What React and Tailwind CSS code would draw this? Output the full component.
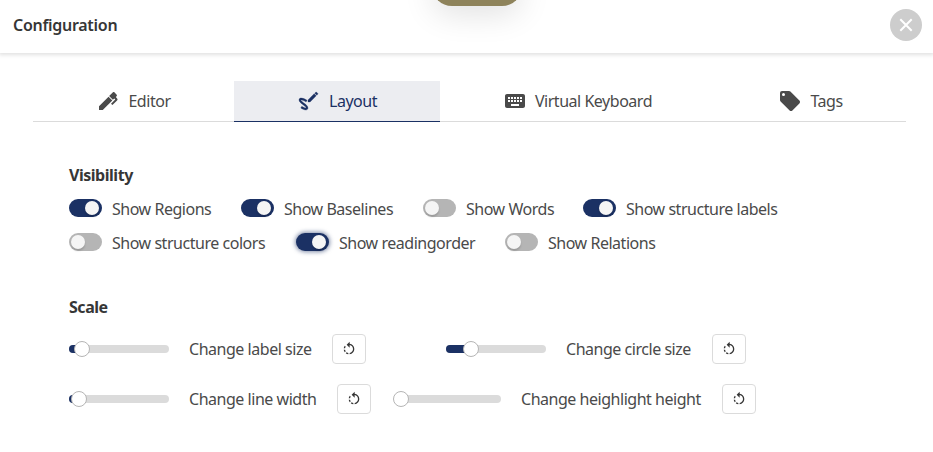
import { MdKeyboard, MdRotateLeft } from "react-icons/md";

const PenIcon = () => (
  <svg viewBox="0 0 24 24" className="h-6 w-6" fill="currentColor">
    <path d="M20.71,7.04C20.37,7.38 20.04,7.71 20.03,8.04C20,8.36 20.34,8.69 20.66,9C21.14,9.5 21.61,9.95 21.59,10.44C21.57,10.93 21.06,11.44 20.55,11.94L16.42,16.08L15,14.66L19.25,10.42L18.29,9.46L16.87,10.87L13.12,7.12L16.96,3.29C17.35,2.9 18,2.9 18.37,3.29L20.71,5.63C21.1,6 21.1,6.65 20.71,7.04M3,17.25L12.56,7.68L16.31,11.43L6.75,21H3V17.25Z" />
  </svg>
);

const DrawIcon = () => (
  <svg viewBox="0 0 24 24" className="h-6 w-6" fill="currentColor" stroke="currentColor" strokeWidth="0.3">
    <path d="M9.75 20.85C11.53 20.15 11.14 18.22 10.24 17C9.35 15.75 8.12 14.89 6.88 14.06C6 13.5 5.19 12.8 4.54 12C4.26 11.67 3.69 11.06 4.27 10.94C4.86 10.82 5.88 11.4 6.4 11.62C7.31 12 8.21 12.44 9.05 12.96L10.06 11.26C8.5 10.23 6.5 9.32 4.64 9.05C3.58 8.89 2.46 9.11 2.1 10.26C1.78 11.25 2.29 12.25 2.87 13.03C4.24 14.86 6.37 15.74 7.96 17.32C8.3 17.65 8.71 18.04 8.91 18.5C9.12 18.94 9.07 18.97 8.6 18.97C7.36 18.97 5.81 18 4.8 17.36L3.79 19.06C5.32 20 7.88 21.47 9.75 20.85M20.84 5.25C21.06 5.03 21.06 4.67 20.84 4.46L19.54 3.16C19.33 2.95 18.97 2.95 18.76 3.16L17.74 4.18L19.82 6.26M11 10.92V13H13.08L19.23 6.85L17.15 4.77L11 10.92Z" />
  </svg>
);

const TagIcon = () => (
  <svg viewBox="0 0 24 24" className="h-6 w-6" fill="currentColor">
    <path d="M5.500 7A1.500 1.500 0 1 1 5.500 4a1.500 1.500 0 0 1 0 3m15.900 4.600-9-9C12 2.200 11.500 2 11 2H4a2 2 0 0 0-2 2v7c0 .6.200 1.100.6 1.400l9 9c.4.4.9.6 1.400.6s1.100-.2 1.400-.6l7-7c.4-.4.600-.9.600-1.400 0-.6-.2-1.100-.6-1.400" />
  </svg>
);

const CloseIcon = () => (
  <svg viewBox="0 0 16 16" className="h-4 w-4" fill="none" stroke="currentColor" strokeWidth="2">
    <path d="M2.300 2.300 13.700 13.700M13.700 2.300 2.300 13.700" />
  </svg>
);

const Toggle = ({ on, focus }) => (
  <span className={`relative h-[18px] w-[33px] shrink-0 rounded-full ${on ? "bg-[#1b3164]" : "bg-[#b5b5b5]"} ${focus ? "shadow-[0_0_4px_1px_rgba(27,49,100,0.55)]" : ""}`}>
    <span className={`absolute top-[2px] h-[14px] w-[14px] rounded-full bg-[#f5f5f5] shadow-[0_2px_2px_rgba(0,0,0,0.15)] ${on ? "left-[16px]" : "left-[2px]"}`} />
  </span>
);

const Option = ({ label, on, focus, width }) => (
  <div className={`flex h-[34px] items-center ${width}`}>
    <Toggle on={on} focus={focus} />
    <span className="ml-[10px] pt-[2px] whitespace-nowrap">{label}</span>
  </div>
);

const Scale = ({ label, value, labelWidth }) => (
  <div className="flex h-[50px] items-center">
    <div className="relative h-2 w-[100px] shrink-0 rounded-full bg-[#dbdbdb]">
      <div className="h-2 rounded-l-full bg-[#1b3164]" style={{ width: value }} />
      <span className="absolute -top-1 h-4 w-4 -translate-x-1/2 rounded-full border border-[#b5b5b5] bg-white" style={{ left: value }} />
    </div>
    <span className={`ml-5 shrink-0 whitespace-nowrap ${labelWidth}`}>{label}</span>
    <button className="flex h-[30px] w-[34px] items-center justify-center rounded border border-[#dbdbdb] text-[#363636]">
      <MdRotateLeft size={16} />
    </button>
  </div>
);

const Tab = ({ icon, label, active, width }) => (
  <div className={`flex h-[41px] items-center justify-center border-b ${width} ${active ? "border-[#1b3164] bg-[#ecedf1] text-[#1b3164]" : "border-[#dbdbdb]"}`}>
    {icon}
    <span className="ml-2">{label}</span>
  </div>
);

export default function App() {
  return (
    <div className="relative h-[452px] w-[933px] overflow-hidden bg-white font-['Noto_Sans',sans-serif] text-[16px] leading-6 tracking-[-0.47px] text-[#4a4a4a]">
      <header className="flex h-[53px] items-center justify-between pr-[11px] pb-[3px] pl-[13px] shadow-[0_1px_4px_1px_rgba(0,0,0,0.12)]">
        <h1 className="font-semibold tracking-[-0.29px] text-[#363636]">Configuration</h1>
        <button className="flex h-8 w-8 items-center justify-center rounded-full bg-[#cdcdcd] text-white">
          <CloseIcon />
        </button>
      </header>
      <div className="absolute -top-[34px] left-[432px] h-10 w-[90px] rounded-[20px] bg-[#8e835b] shadow-[0_8px_32px_rgba(0,0,0,0.12)]" />
      <nav className="mt-7 ml-[33px] flex w-[873px]">
        <Tab icon={<PenIcon />} label="Editor" width="w-[201px]" />
        <Tab icon={<DrawIcon />} label="Layout" active width="w-[206px]" />
        <Tab icon={<MdKeyboard size={24} />} label="Virtual Keyboard" width="w-[275px]" />
        <Tab icon={<TagIcon />} label="Tags" width="w-[191px]" />
      </nav>
      <main className="pt-[41px] pl-[69px]">
        <h2 className="font-bold text-[#363636]">Visibility</h2>
        <div className="mt-1 flex">
          <Option label="Show Regions" on width="w-[172px]" />
          <Option label="Show Baselines" on width="w-[182px]" />
          <Option label="Show Words" width="w-[160px]" />
          <Option label="Show structure labels" on width="w-[200px]" />
        </div>
        <div className="flex">
          <Option label="Show structure colors" width="w-[227px]" />
          <Option label="Show readingorder" on focus width="w-[209px]" />
          <Option label="Show Relations" width="w-[160px]" />
        </div>
        <h2 className="mt-9 font-bold text-[#363636]">Scale</h2>
        <div className="mt-[5px] flex gap-[80px]">
          <Scale label="Change label size" value={13} labelWidth="w-[143px]" />
          <Scale label="Change circle size" value={25} labelWidth="w-[146px]" />
        </div>
        <div className="flex gap-[30px]">
          <Scale label="Change line width" value={10} labelWidth="w-[148px]" />
          <Scale label="Change heighlight height" value={0} labelWidth="w-[201px]" />
        </div>
      </main>
    </div>
  );
}
